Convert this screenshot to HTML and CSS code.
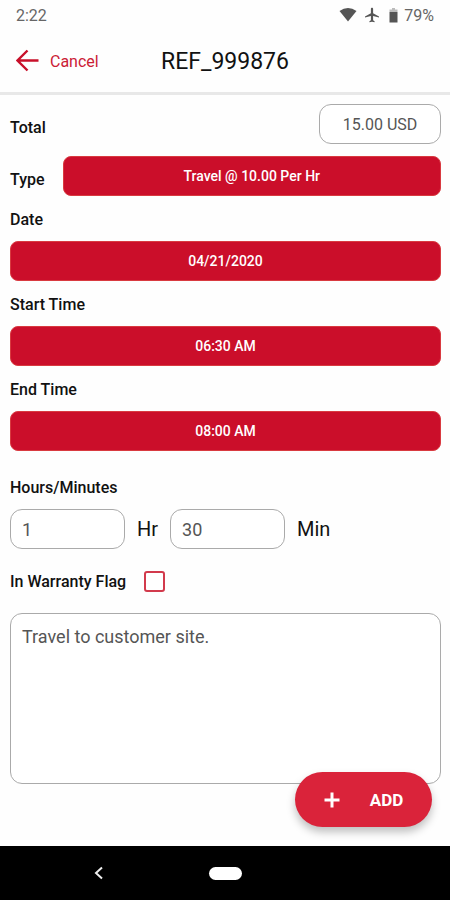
FILE: index.html
```html
<!DOCTYPE html>
<html lang="en">
<head>
<meta charset="utf-8">
<meta name="viewport" content="width=device-width, initial-scale=1">
<title>REF_999876</title>
<link rel="stylesheet" href="styles.css">
</head>
<body>
<div class="status">
  <span>2:22</span>
  <div class="status-icons">
    <svg width="18" height="14" viewBox="0 0 18 14" aria-hidden="true"><path d="M0.5 3Q9-2.8 17.500 3L9 13.500Z"/></svg>
    <svg class="plane" width="14" height="16" viewBox="2 2 19 20" aria-hidden="true"><path d="M21 15.500v-1.500l-8-4.500V3.500C13 2.670 12.330 2 11.500 2S10 2.670 10 3.500V9.500l-8 4.500v1.500l8-2V19l-2 1.500V22l3.500-1 3.500 1v-1.500L13 19v-5.500z"/></svg>
    <svg class="battery" width="9" height="15" viewBox="0 0 9 15" aria-hidden="true"><path class="faint" d="M3 0h3v1.500h2.500V4h-8V1.500H3z"/><path d="M0.500 4h8v10.500h-8z"/></svg>
    <span>79%</span>
  </div>
</div>
<header class="header">
  <button class="cancel" type="button">
    <svg width="24" height="24" viewBox="0 0 24 24" aria-hidden="true"><path stroke-width="2.4" d="M22.500 11.500H2M11.500 1.500L1.500 11.500l10 10"/></svg>
    <span>Cancel</span>
  </button>
  <h1>REF_999876</h1>
</header>
<form class="form">
  <div class="row row-total">
    <label for="total">Total</label>
    <input class="box total" id="total" type="text" value="15.00 USD">
  </div>
  <div class="row">
    <label for="type">Type</label>
    <select class="bar" id="type"><option>Travel @ 10.00 Per Hr</option></select>
  </div>
  <label class="caption" for="date">Date</label>
  <button class="bar" id="date" type="button">04/21/2020</button>
  <label class="caption" for="start">Start Time</label>
  <button class="bar" id="start" type="button">06:30 AM</button>
  <label class="caption" for="end">End Time</label>
  <button class="bar" id="end" type="button">08:00 AM</button>
  <label class="caption caption-hours" for="hours">Hours/Minutes</label>
  <div class="duration">
    <input class="box" id="hours" type="text" value="1">
    <label for="hours">Hr</label>
    <input class="box" id="minutes" type="text" value="30">
    <label for="minutes">Min</label>
  </div>
  <div class="flag">
    <label for="warranty">In Warranty Flag</label>
    <input id="warranty" type="checkbox">
  </div>
  <textarea class="box notes" aria-label="Notes">Travel to customer site.</textarea>
  <button class="add" type="button">
    <svg width="16" height="16" viewBox="0 0 16 16" aria-hidden="true"><path d="M8 0.500v15M0.500 8h15"/></svg>
    <span>ADD</span>
  </button>
</form>
<nav class="system">
  <button type="button" aria-label="Back"><svg width="10" height="14" viewBox="0 0 10 14" aria-hidden="true"><path d="M8 1.500L2 7l6 5.500"/></svg></button>
  <button class="home" type="button" aria-label="Home"></button>
</nav>
</body>
</html>
```
FILE: styles.css
```css
* { box-sizing: border-box; }

body {
  margin: 0;
  min-height: 100vh;
  display: flex;
  flex-direction: column;
  background: #fefefe;
  color: #111;
  font-family: Roboto, "Liberation Sans", sans-serif;
}

button, input, select, textarea { font-family: inherit; margin: 0; }
button { border: 0; padding: 0; cursor: pointer; }

.status {
  height: 30px;
  padding: 0 16px;
  display: flex;
  align-items: center;
  justify-content: space-between;
  font-size: 16px;
  color: #666;
}
.status-icons { display: flex; align-items: center; }
.status svg { fill: #555; }
.status .plane { margin-left: 8px; }
.status .battery { margin: 0 6px 0 10px; }
.status .faint { fill: #bbb; }

.header {
  height: 65px;
  padding: 0 16px;
  display: grid;
  grid-template-columns: 1fr auto 1fr;
  align-items: center;
  border-bottom: 3px solid #e8e8e8;
}
.header h1 { margin: 0; font-size: 23px; font-weight: 400; }
.cancel {
  display: flex;
  align-items: center;
  gap: 10px;
  background: none;
  color: #cb2035;
  font-size: 16px;
}
.cancel svg { fill: none; stroke: #c8102a; }

.form {
  position: relative;
  flex: 1;
  padding: 9px 9px 62px 10px;
  display: flex;
  flex-direction: column;
  font-size: 16px;
  font-weight: 500;
}
.row { display: flex; align-items: center; gap: 18px; }
.row label { padding-top: 6px; }
.row-total { justify-content: space-between; margin-bottom: 12px; }
.caption { padding-top: 2px; line-height: 43px; }
.caption-hours { margin-top: 13px; }

.bar {
  height: 40px;
  border: 1px solid #d93a40;
  border-radius: 8px;
  background: #cb0e2a;
  color: #fff;
  font-size: 14px;
  font-weight: 500;
  text-align: center;
}
.row .bar { flex: 1; appearance: none; padding: 0; text-align-last: center; }

.box {
  height: 40px;
  padding: 0 11px;
  border: 1px solid #aaa;
  border-radius: 12px;
  background: #fff;
  color: #555;
  font-size: 18px;
}
.total { width: 122px; padding: 0; font-size: 16px; text-align: center; }

.duration { display: flex; align-items: center; gap: 12px; font-size: 20px; font-weight: 400; }
.duration .box { width: 115px; }

.flag { height: 64px; display: flex; align-items: center; gap: 18px; }
.flag input {
  appearance: none;
  width: 21px;
  height: 21px;
  border: 2px solid #d23a4c;
  border-radius: 3px;
  background: #fff;
}

.notes {
  flex: 1;
  min-height: 120px;
  padding: 11px;
  line-height: 24px;
  resize: none;
}

.add {
  position: absolute;
  right: 18px;
  bottom: 19px;
  width: 137px;
  height: 55px;
  display: flex;
  align-items: center;
  justify-content: center;
  gap: 30px;
  border-radius: 28px;
  background: #da233a;
  box-shadow: 0 5px 8px rgba(0, 0, 0, 0.25);
  color: #fff;
  font-size: 17px;
  font-weight: 700;
}
.add svg { stroke: #fff; stroke-width: 3; }

.system {
  height: 54px;
  padding: 0 94px;
  display: grid;
  grid-template-columns: 1fr auto 1fr;
  align-items: center;
  background: #000;
}
.system button { justify-self: start; background: none; }
.system svg { display: block; fill: none; stroke: #eee; stroke-width: 2; }
.system .home { width: 33px; height: 13px; border-radius: 7px; background: #fff; }
```
